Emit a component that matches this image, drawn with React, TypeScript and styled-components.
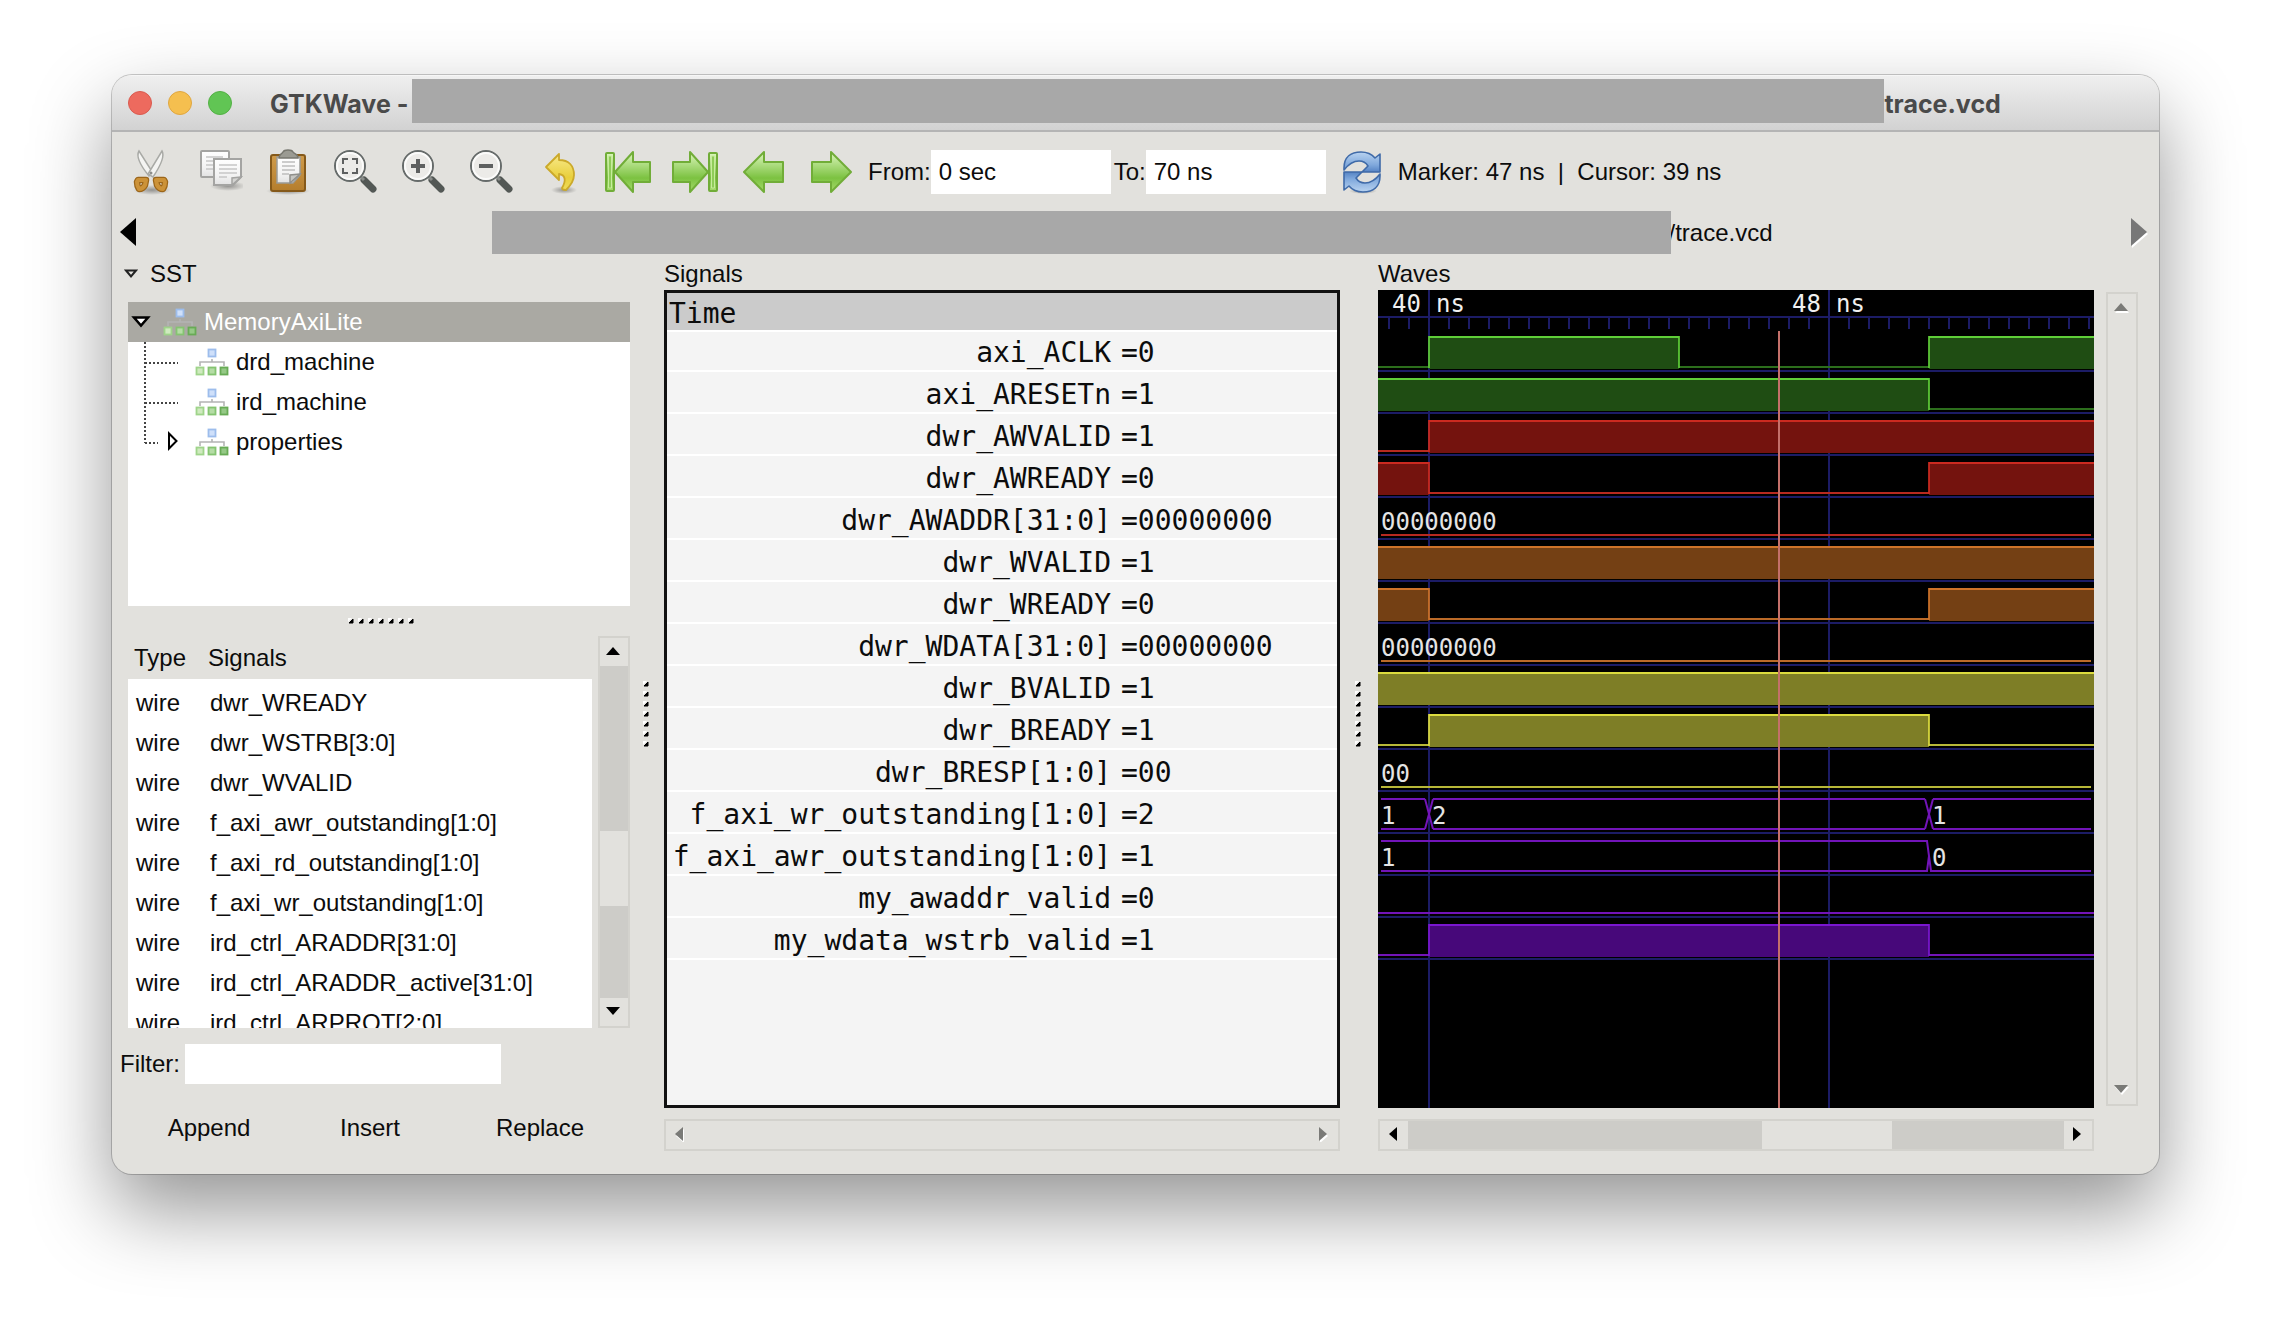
import React from "react";
import styled, { createGlobalStyle } from "styled-components";

const color = {
  chrome: "#e2e1dd",
  trough: "#cdccc8",
  edge: "#d3d2cd",
  selected: "#aaa9a3",
  redacted: "#a8a8a8",
  text: "#0c0c0c",
  grid: "#1c1c66",
  marker: "#c4706a",
};

const sans = `"Liberation Sans", Arial, sans-serif`;
const mono = `"DejaVu Sans Mono", "Liberation Mono", monospace`;

const GlobalStyle = createGlobalStyle`
  *, *::before, *::after { box-sizing: border-box; }
  body { margin: 0; background: #fff; color: ${color.text}; font: 24px/28px ${sans}; }
  button, input { font: inherit; color: inherit; border: 0; padding: 0; margin: 0; border-radius: 0; }
  button { background: none; }
  svg { display: block; }
`;

/* ---------- window frame ---------- */

const Desktop = styled.div`
  padding: 75px 111px 148px 112px;
`;

const Window = styled.main`
  border-radius: 20px;
  overflow: hidden;
  background: ${color.chrome};
  box-shadow: 0 0 0 1px rgba(0, 0, 0, 0.2), 0 36px 80px rgba(0, 0, 0, 0.42);
`;

const TitleBar = styled.header`
  display: grid;
  grid-template-columns: 1fr auto 1fr;
  height: 57px;
  padding-top: 3px;
  background: linear-gradient(#efefef, #d2d2d2);
  border-top: 1px solid #f6f6f6;
  border-bottom: 2px solid #b4b4b4;
`;

const Lights = styled.div`
  display: flex;
  align-items: center;
  gap: 16px;
  height: 48px;
  padding-left: 16px;
`;

const Light = styled.button<{ $fill: string; $ring: string }>`
  width: 24px;
  height: 24px;
  border-radius: 50%;
  background: ${(p) => p.$fill};
  border: 1px solid ${(p) => p.$ring};
`;

const Title = styled.h1`
  display: flex;
  gap: 4px;
  margin: 0;
  min-width: 0;
  color: #4a4a4a;
  font: 700 25px/50px Inter, ${sans};
`;

const TitlePath = styled.span`
  display: flex;
`;

const Redacted = styled.span<{ $width: number; $height: number }>`
  position: relative;
  width: ${(p) => p.$width}px;
  height: ${(p) => p.$height}px;
  background: ${color.redacted};
`;

/* ---------- toolbar ---------- */

const Toolbar = styled.div`
  display: flex;
  align-items: center;
  height: 79px;
  padding-left: 5px;
`;

const ToolButton = styled.button`
  display: grid;
  place-items: center;
  flex: none;
  width: 68px;
  height: 56px;
`;

const Field = styled.label`
  display: flex;
  align-items: center;
  margin-left: 3px;
`;

const TextBox = styled.input`
  width: 180px;
  height: 44px;
  padding: 0 8px;
  background: #fff;
`;

const Status = styled.output`
  white-space: pre;
`;

const Reload = styled(ToolButton)`
  width: 72px;
`;

/* ---------- file tab ---------- */

const TabBar = styled.nav`
  display: flex;
  align-items: center;
  justify-content: space-between;
  height: 43px;
  padding: 0 10px 0 8px;
`;

const TabName = styled.div`
  display: flex;
  align-items: center;
  margin-right: 4px;
`;

const TabText = styled.span`
  margin-left: -3px;
`;

/* ---------- panes ---------- */

const Panes = styled.div`
  display: grid;
  grid-template-columns: 518px 34px minmax(0, 676fr) 38px minmax(0, 716fr) 65px;
  padding-bottom: 23px;
`;

const Pane = styled.section`
  display: flex;
  flex-direction: column;
  min-width: 0;
`;

const PaneTitle = styled.h2`
  display: flex;
  align-items: center;
  gap: 12px;
  height: 36px;
  margin: 0;
  padding-top: 4px;
  font: inherit;
`;

const SidePane = styled(Pane)`
  padding-left: 16px;
`;

const SideTitle = styled(PaneTitle)`
  margin-left: -4px;
`;

const GripCell = styled.div`
  display: grid;
  place-items: center;
  padding: 23px 2px 0 0;
`;

const ListGrip = styled.div`
  display: grid;
  place-items: center;
  height: 30px;
  padding-left: 4px;
`;

/* ---------- hierarchy tree ---------- */

const Tree = styled.ul`
  margin: 12px 0 0;
  padding: 0;
  height: 304px;
  list-style: none;
  background: #fff;
`;

const TreeRow = styled.li<{ $selected?: boolean }>`
  display: flex;
  align-items: center;
  height: 40px;
  background: ${(p) => (p.$selected ? color.selected : "transparent")};
  color: ${(p) => (p.$selected ? "#fff" : "inherit")};
`;

const TreeName = styled.span`
  padding-left: 7px;
`;

/* ---------- signal list ---------- */

const ListArea = styled.div`
  display: flex;
  justify-content: space-between;
  height: 392px;
`;

const ListClip = styled.div`
  width: 464px;
  overflow: hidden;
`;

const ListTable = styled.table`
  width: 100%;
  border-collapse: separate;
  border-spacing: 0;
  background: #fff;
  th, td { padding: 0 0 0 8px; text-align: left; font-weight: 400; white-space: nowrap; }
  th { height: 47px; padding-left: 6px; background: ${color.chrome}; border-bottom: 4px solid #fff; }
  td { height: 40px; }
  th:first-child { width: 74px; }
`;

const FilterRow = styled.label`
  display: flex;
  align-items: center;
  gap: 5px;
  margin: 16px 0 0 -8px;
`;

const FilterBox = styled(TextBox)`
  width: 316px;
  height: 40px;
`;

const Actions = styled.div`
  display: grid;
  grid-template-columns: 162px 160px 180px;
  margin-top: 24px;
`;

const ActionButton = styled.button`
  height: 40px;
`;

/* ---------- scrollbars ---------- */

const Bar = styled.div<{ $vertical?: boolean; $live?: boolean }>`
  display: flex;
  flex: none;
  flex-direction: ${(p) => (p.$vertical ? "column" : "row")};
  justify-content: space-between;
  ${(p) => (p.$vertical ? "width: 32px; height: 100%;" : "height: 32px;")}
  border: 2px solid ${color.edge};
  background: ${(p) => (p.$live ? color.trough : color.chrome)};
`;

const BarSpace = styled.span<{ $grow: number }>`
  flex: ${(p) => p.$grow} 1 0;
`;

const BarThumb = styled(BarSpace)`
  background: ${color.chrome};
`;

const BarButton = styled.button`
  display: grid;
  place-items: center;
  width: 28px;
  height: 28px;
  padding: 0 2px 2px 0;
  background: ${color.chrome};
`;

const UnderBar = styled.div`
  margin-top: 11px;
`;

const SideBar = styled.div`
  display: flex;
  flex-direction: column;
  height: 814px;
  margin: 38px 0 0 12px;
`;

/* ---------- signals ---------- */

const SignalBox = styled.div`
  height: 818px;
  border: 3px solid #111;
  background: #f4f4f4;
  font: 28px/32px ${mono};
  overflow: hidden;
`;

const SignalTable = styled.table`
  width: 100%;
  border-collapse: separate;
  border-spacing: 0;
  table-layout: fixed;
  th { position: relative; height: 37px; padding: 5px 0 0 2px; text-align: left; font-weight: 400; background: #cbcbcb; box-shadow: 0 2px #fff; }
  td { height: 42px; padding: 6px 0 0; border-bottom: 2px solid #fff; white-space: nowrap; }
  td:first-child { text-align: right; padding-right: 10px; }
  th:first-child { width: 454px; }
`;

const WaveBox = styled.div`
  height: 818px;
  background: #000;
  overflow: hidden;
`;

/* ---------- data ---------- */

type Hue = { fill: string; high: string; low: string };
const green: Hue = { fill: "#1f4d13", high: "#5fce38", low: "#2c6e1c" };
const red: Hue = { fill: "#74130e", high: "#cc2a20", low: "#b82a20" };
const orange: Hue = { fill: "#744014", high: "#cf7329", low: "#bb6a28" };
const yellow: Hue = { fill: "#7e7e26", high: "#dcdc3e", low: "#b8b838" };
const purple: Hue = { fill: "#47087a", high: "#7a16d0", low: "#7214b8" };

type Signal = {
  name: string;
  value: string;
  hue: Hue;
  high?: [number, number][];
  bus?: { from: number; text: string }[];
};

// Times are in nanoseconds; END stands for "past the right edge".
const START = 38;
const END = 140;

const signals: Signal[] = [
  { name: "axi_ACLK", value: "0", hue: green, high: [[40, 45], [50, END]] },
  { name: "axi_ARESETn", value: "1", hue: green, high: [[START, 50]] },
  { name: "dwr_AWVALID", value: "1", hue: red, high: [[40, END]] },
  { name: "dwr_AWREADY", value: "0", hue: red, high: [[START, 40], [50, END]] },
  { name: "dwr_AWADDR[31:0]", value: "00000000", hue: red, bus: [{ from: START, text: "00000000" }] },
  { name: "dwr_WVALID", value: "1", hue: orange, high: [[START, END]] },
  { name: "dwr_WREADY", value: "0", hue: orange, high: [[START, 40], [50, END]] },
  { name: "dwr_WDATA[31:0]", value: "00000000", hue: orange, bus: [{ from: START, text: "00000000" }] },
  { name: "dwr_BVALID", value: "1", hue: yellow, high: [[START, END]] },
  { name: "dwr_BREADY", value: "1", hue: yellow, high: [[40, 50]] },
  { name: "dwr_BRESP[1:0]", value: "00", hue: yellow, bus: [{ from: START, text: "00" }] },
  { name: "f_axi_wr_outstanding[1:0]", value: "2", hue: purple, bus: [{ from: START, text: "1" }, { from: 40, text: "2" }, { from: 50, text: "1" }] },
  { name: "f_axi_awr_outstanding[1:0]", value: "1", hue: purple, bus: [{ from: START, text: "1" }, { from: 50, text: "0" }] },
  { name: "my_awaddr_valid", value: "0", hue: purple, high: [] },
  { name: "my_wdata_wstrb_valid", value: "1", hue: purple, high: [[40, 50]] },
];

const wires = [
  "dwr_WREADY",
  "dwr_WSTRB[3:0]",
  "dwr_WVALID",
  "f_axi_awr_outstanding[1:0]",
  "f_axi_rd_outstanding[1:0]",
  "f_axi_wr_outstanding[1:0]",
  "ird_ctrl_ARADDR[31:0]",
  "ird_ctrl_ARADDR_active[31:0]",
  "ird_ctrl_ARPROT[2:0]",
];

/* ---------- waveforms ---------- */

const NS = 50;
const ROW = 42;
const xAt = (t: number) => 51 + (t - 40) * NS;

function ScalarWave({ s, y }: { s: Signal; y: number }) {
  const spans = s.high ?? [];
  const edges = spans.flat().filter((t) => t !== START && t !== END);
  const lows: [number, number][] = [];
  let at = START;
  spans.forEach(([a, b]) => {
    if (a > at) lows.push([at, a]);
    at = b;
  });
  if (at < END) lows.push([at, END]);
  return (
    <g>
      {spans.map(([a, b]) => (
        <g key={a}>
          <rect x={xAt(a)} y={y + 47} width={xAt(b) - xAt(a)} height={32} fill={s.hue.fill} />
          <rect x={xAt(a)} y={y + 46} width={xAt(b) - xAt(a)} height={2} fill={s.hue.high} />
        </g>
      ))}
      {lows.map(([a, b]) => (
        <rect key={a} x={xAt(a)} y={y + 76} width={xAt(b) - xAt(a)} height={2} fill={s.hue.low} />
      ))}
      {edges.map((t) => (
        <rect key={t} x={xAt(t) - 1} y={y + 46} width={2} height={32} fill={s.hue.high} opacity={0.85} />
      ))}
    </g>
  );
}

function BusWave({ s, y }: { s: Signal; y: number }) {
  const parts = s.bus ?? [];
  const top = y + 47;
  const low = y + 77;
  const mid = y + 62;
  return (
    <g stroke={s.hue.low} strokeWidth={2} fill="none">
      {parts.map((p, i) => {
        const zero = /^0+$/.test(p.text);
        const next = parts[i + 1];
        const x1 = i === 0 ? 3 : xAt(p.from) + 4;
        const x2: number | string = next ? xAt(next.from) - 4 : "100%";
        return (
          <g key={p.from}>
            {!zero && <line x1={x1} y1={top} x2={x2} y2={top} />}
            <line x1={x1} y1={low} x2={x2} y2={low} />
            {i > 0 && !zero && (
              <path d={`M${x1 - 8} ${top}L${x1} ${low}M${x1 - 8} ${low}L${x1} ${top}`} />
            )}
            {i > 0 && zero && (
              <path d={`M${x1 - 8} ${top}h2L${x1 - 2} ${low}h2M${x1 - 8} ${low}h2L${x1 - 4} ${mid}`} />
            )}
            <text x={i === 0 ? 3 : xAt(p.from) + 3} y={y + 72} fill="#e4e4e4" stroke="none">
              {p.text}
            </text>
          </g>
        );
      })}
      <rect x="100%" y={y + 44} width={3} height={35} transform="translate(-3 0)" fill="#000" stroke="none" />
    </g>
  );
}

function Waves() {
  const ticks = Array.from({ length: 140 }, (_, i) => 11 + i * 20);
  return (
    <svg width="100%" height="100%" fontFamily={mono} fontSize={24} role="img" aria-label="Waveforms">
      <g fill={color.grid}>
        <rect x={0} y={26} width="100%" height={2} />
        {ticks.map((x) => (
          <rect key={x} x={x - 1} y={28} width={2} height={11} />
        ))}
        {signals.map((s, i) => (
          <rect key={s.name} x={0} y={i * ROW + 80} width="100%" height={2} />
        ))}
        {[40, 48].map((t) => (
          <rect key={t} x={xAt(t) - 1} y={0} width={2} height="100%" />
        ))}
      </g>
      {[40, 48].map((t) => (
        <g key={t} fill="#f0f0f0">
          <text x={xAt(t) - 8} y={22} textAnchor="end">{t}</text>
          <text x={xAt(t) + 7} y={22}>ns</text>
        </g>
      ))}
      {signals.map((s, i) =>
        s.bus ? <BusWave key={s.name} s={s} y={i * ROW} /> : <ScalarWave key={s.name} s={s} y={i * ROW} />
      )}
      <rect x={xAt(47) - 1} y={41} width={2} height="100%" fill={color.marker} />
    </svg>
  );
}

/* ---------- small drawings ---------- */

type Dir = "up" | "down" | "left" | "right";
const turn: Record<Dir, number> = { up: 0, right: 90, down: 180, left: 270 };

function Arrow({ dir, dim }: { dir: Dir; dim?: boolean }) {
  const shape = <path d="M8 4L15 12H1Z" transform={`rotate(${turn[dir]} 8 8)`} />;
  return (
    <svg width="16" height="16" viewBox="0 0 16 16">
      {dim && <g fill="#fff" transform="translate(1 2)">{shape}</g>}
      <g fill={dim ? "#7a7a77" : "#000"}>{shape}</g>
    </svg>
  );
}

function TabArrow({ dir, dim }: { dir: "left" | "right"; dim?: boolean }) {
  const d = dir === "left" ? "M16 0V28L0 14Z" : "M0 0V28L16 14Z";
  return (
    <svg width="18" height="30" viewBox="0 0 18 30">
      {dim && <path d={d} fill="#fff" transform="translate(1 2)" />}
      <path d={d} fill={dim ? "#777" : "#000"} />
    </svg>
  );
}

function Grip({ vertical }: { vertical?: boolean }) {
  const dots = [0, 1, 2, 3, 4, 5, 6];
  return (
    <svg width={vertical ? 6 : 66} height={vertical ? 66 : 6}>
      {dots.map((i) => (
        <g key={i} transform={vertical ? `translate(0 ${i * 10})` : `translate(${i * 10} 0)`}>
          <path d="M0 0H4L0 4Z" fill="#fff" />
          <path d="M5 1V5H1Z" fill="#000" stroke="#000" />
        </g>
      ))}
    </svg>
  );
}

function Disclosure() {
  return (
    <svg width="14" height="10" viewBox="0 0 14 10">
      <path d="M2 1.5H12L7 7.5Z" fill="#e2e1dd" stroke="#222" strokeWidth="2" />
    </svg>
  );
}

function ModuleIcon() {
  return (
    <svg width="34" height="30" viewBox="0 0 34 30">
      <path d="M5 19V15H29V19M17 12V15" fill="none" stroke="#b4b4b4" strokeWidth="1.6" />
      <rect x="13.5" y="2.5" width="7" height="7" fill="#cfe0fa" stroke="#9dbdec" strokeWidth="1.8" />
      <rect x="1.5" y="20.5" width="7" height="7" fill="#cfeabf" stroke="#9fd48a" strokeWidth="1.8" />
      <rect x="13.5" y="20.5" width="7" height="7" fill="#b5dda5" stroke="#85c471" strokeWidth="1.8" />
      <rect x="25.5" y="20.5" width="7" height="7" fill="#95c986" stroke="#68ab55" strokeWidth="1.8" />
    </svg>
  );
}

function Guide({ kind }: { kind: "root" | "leaf" | "last" }) {
  if (kind === "root") {
    return (
      <svg width="35" height="40">
        <path d="M6 15.5H20L13 23.5Z" fill="#fff" stroke="#000" strokeWidth="2.5" />
      </svg>
    );
  }
  return (
    <svg width="67" height="40">
      <g stroke="#444" strokeWidth="2" strokeDasharray="2 2" fill="none">
        <path d={kind === "leaf" ? "M17 0V40M17 21H50" : "M17 0V21M17 21H30"} />
      </g>
      {kind === "last" && <path d="M41 11.5V26.5L48.5 19Z" fill="#fff" stroke="#000" strokeWidth="2" />}
    </svg>
  );
}

/* ---------- toolbar icons ---------- */

function Icon({ children }: { children: React.ReactNode }) {
  return (
    <svg width="48" height="48" viewBox="0 0 48 48" fill="none">
      {children}
    </svg>
  );
}

function Gradients() {
  const stops: [string, string, string, string][] = [
    ["gGreen", "#dcf6bd", "#7cc241", "#a6da6c"],
    ["gGold", "#f8ea8c", "#e9cf3c", "#efdc5a"],
    ["gBlue", "#b9d3f0", "#7fa8dc", "#5583c4"],
    ["gWood", "#d09c4b", "#be8838", "#b47d2c"],
    ["gPage", "#ffffff", "#f2f2f2", "#e2e2e2"],
  ];
  return (
    <svg width="0" height="0" aria-hidden="true">
      <defs>
        {stops.map(([id, a, b, c]) => (
          <linearGradient key={id} id={id} x1="0" y1="0" x2="0" y2="1">
            <stop offset="0" stopColor={a} />
            <stop offset="0.65" stopColor={b} />
            <stop offset="1" stopColor={c} />
          </linearGradient>
        ))}
        <radialGradient id="gShade">
          <stop offset="0" stopColor="#000" stopOpacity="0.35" />
          <stop offset="1" stopColor="#000" stopOpacity="0" />
        </radialGradient>
      </defs>
    </svg>
  );
}

function CutIcon() {
  return (
    <Icon>
      <ellipse cx="25" cy="42" rx="19" ry="5" fill="url(#gShade)" />
      <path d="M12 3C9 8 13 17 22 28L26 25Z" fill="#f4f4f2" stroke="#a9aaa6" strokeWidth="1.5" />
      <path d="M35 3C38 8 34 17 26 29L21 26Z" fill="#f4f4f2" stroke="#a9aaa6" strokeWidth="1.5" />
      <circle cx="24" cy="25" r="1.5" fill="#8d8d8a" />
      <g fill="#e2e1dd" stroke="#9c661a" strokeWidth="6.5" strokeLinejoin="round">
        <path d="M11 32H19L18 37Q16 41 12 41Q10 38 10 34Z" />
        <path d="M37 32H29L30 37Q32 41 36 41Q38 38 38 34Z" />
      </g>
      <g stroke="#cc9238" strokeWidth="4" strokeLinejoin="round">
        <path d="M11 32H19L18 37Q16 41 12 41Q10 38 10 34Z" />
        <path d="M37 32H29L30 37Q32 41 36 41Q38 38 38 34Z" />
      </g>
    </Icon>
  );
}

function CopyIcon() {
  return (
    <Icon>
      <ellipse cx="33" cy="38" rx="18" ry="5" fill="url(#gShade)" />
      <rect x="6" y="3" width="28" height="26" rx="1" fill="url(#gPage)" stroke="#a4a4a2" strokeWidth="2" />
      <path d="M11 9H28M11 13H28M11 17H20M11 21H20" stroke="#c6c6c6" strokeWidth="1.5" />
      <path d="M19 11H46V29L38 37H19Z" fill="url(#gPage)" stroke="#a4a4a2" strokeWidth="2" />
      <path d="M24 17H42M24 21H42M24 25H42M24 29H32" stroke="#c6c6c6" strokeWidth="1.5" />
      <path d="M46 29L37 30L37 37Z" fill="#d4d4d2" stroke="#a4a4a2" strokeWidth="1.5" />
    </Icon>
  );
}

function PasteIcon() {
  return (
    <Icon>
      <ellipse cx="25" cy="43" rx="22" ry="4" fill="url(#gShade)" />
      <rect x="8" y="7" width="34" height="36" rx="2" fill="url(#gWood)" stroke="#85591a" strokeWidth="2" />
      <path d="M14 9H37V27L30 35H14Z" fill="url(#gPage)" stroke="#9b9b97" strokeWidth="1.5" />
      <path d="M19 14H32M19 18H32M19 22H32M19 26H26" stroke="#bdbdbd" strokeWidth="1.5" />
      <path d="M37 26L27 27L27 35Z" fill="#c6c6c2" stroke="#8f8f8b" strokeWidth="1.5" />
      <path d="M16 10C16 6 19 6 20 4Q21 2 25 2Q29 2 30 4C31 6 35 6 35 10Z" fill="#9b9b93" stroke="#77776f" strokeWidth="1.5" />
    </Icon>
  );
}

function ZoomIcon({ kind }: { kind: "fit" | "in" | "out" }) {
  return (
    <Icon>
      <path d="M33 32L42 41" stroke="#535855" strokeWidth="7" strokeLinecap="round" />
      <path d="M29 28L33 32" stroke="#8a8d8a" strokeWidth="3" />
      <circle cx="19" cy="18" r="15" fill="#ecebe8" stroke="#666b6a" strokeWidth="2" />
      <circle cx="19" cy="18" r="13" stroke="#fbfbfa" strokeWidth="2" />
      {kind === "fit" && (
        <path d="M12 16V11H17M21 11H26V16M26 20V25H21M17 25H12V20" stroke="#5e6060" strokeWidth="2" />
      )}
      {kind === "in" && <path d="M12 18H26M19 11V25" stroke="#5e6060" strokeWidth="4" />}
      {kind === "out" && <path d="M12 18H26" stroke="#5e6060" strokeWidth="4" />}
    </Icon>
  );
}

function UndoIcon() {
  return (
    <Icon>
      <ellipse cx="29" cy="42" rx="13" ry="4" fill="url(#gShade)" />
      <path
        d="M11 19L24 6V12C34 12 39 18 39 27C39 34 34 39 31 42Q27 42 27 40C31 33 31 27 24 26V32Z"
        fill="url(#gGold)"
        stroke="#cba92a"
        strokeWidth="1.8"
        strokeLinejoin="round"
      />
    </Icon>
  );
}

function MoveIcon({ flip, bar }: { flip?: boolean; bar?: boolean }) {
  const arrow = bar ? "M12 24L30 4V14H47V34H30V44Z" : "M5 24L25 4V14H44V34H25V44Z";
  return (
    <Icon>
      <g
        transform={flip ? "translate(49 0) scale(-1 1)" : undefined}
        fill="url(#gGreen)"
        stroke="#71ad38"
        strokeWidth="2"
        strokeLinejoin="round"
      >
        <path d={arrow} />
        {bar && <rect x="3" y="5" width="8" height="38" rx="1" />}
        {bar && <rect x="5.5" y="8" width="3" height="32" stroke="#c7ec9c" strokeWidth="1" fill="#8fcc59" />}
      </g>
    </Icon>
  );
}

function ReloadIcon() {
  const half = "M6 20C6 9 13 4 23 4Q32 4 37 10L42 6V24H24L30 18Q27 13 21 13Q13 13 6 22Z";
  return (
    <Icon>
      <ellipse cx="25" cy="43" rx="14" ry="3" fill="url(#gShade)" />
      <g fill="url(#gBlue)" stroke="#3f6aa8" strokeWidth="1.6" strokeLinejoin="round">
        <path d={half} />
        <path d={half} transform="rotate(180 24 24)" />
      </g>
    </Icon>
  );
}

const tools: [string, React.ReactNode][] = [
  ["Cut", <CutIcon />],
  ["Copy", <CopyIcon />],
  ["Paste", <PasteIcon />],
  ["Zoom fit", <ZoomIcon kind="fit" />],
  ["Zoom in", <ZoomIcon kind="in" />],
  ["Zoom out", <ZoomIcon kind="out" />],
  ["Zoom undo", <UndoIcon />],
  ["Zoom to start", <MoveIcon bar />],
  ["Zoom to end", <MoveIcon bar flip />],
  ["Previous edge", <MoveIcon />],
  ["Next edge", <MoveIcon flip />],
];

/* ---------- scrollbar ---------- */

function ScrollBar({ vertical, parts }: { vertical?: boolean; parts?: [number, number, number] }) {
  const dim = !parts;
  return (
    <Bar $vertical={vertical} $live={!dim}>
      <BarButton aria-label="Scroll back" disabled={dim}>
        <Arrow dir={vertical ? "up" : "left"} dim={dim} />
      </BarButton>
      {parts && (
        <>
          <BarSpace $grow={parts[0]} />
          <BarThumb $grow={parts[1]} />
          <BarSpace $grow={parts[2]} />
        </>
      )}
      <BarButton aria-label="Scroll forward" disabled={dim}>
        <Arrow dir={vertical ? "down" : "right"} dim={dim} />
      </BarButton>
    </Bar>
  );
}

/* ---------- application ---------- */

export default function App() {
  return (
    <Desktop>
      <GlobalStyle />
      <Window>
        <Gradients />
        <TitleBar>
          <Lights>
            <Light $fill="#ed6a5e" $ring="#d95a4f" aria-label="Close" />
            <Light $fill="#f5bf4f" $ring="#dfa640" aria-label="Minimize" />
            <Light $fill="#61c554" $ring="#53b045" aria-label="Zoom" />
          </Lights>
          <Title>
            GTKWave -
            <TitlePath>
              <Redacted $width={1472} $height={44} />
              trace.vcd
            </TitlePath>
          </Title>
        </TitleBar>

        <Toolbar>
          {tools.map(([name, icon]) => (
            <ToolButton key={name} aria-label={name}>{icon}</ToolButton>
          ))}
          <Field>From:<TextBox defaultValue="0 sec" /></Field>
          <Field>To:<TextBox defaultValue="70 ns" /></Field>
          <Reload aria-label="Reload"><ReloadIcon /></Reload>
          <Status>{"Marker: 47 ns  |  Cursor: 39 ns"}</Status>
        </Toolbar>

        <TabBar>
          <button aria-label="Previous tab"><TabArrow dir="left" /></button>
          <TabName>
            <Redacted $width={1179} $height={43} />
            <TabText>/trace.vcd</TabText>
          </TabName>
          <button aria-label="Next tab" disabled><TabArrow dir="right" dim /></button>
        </TabBar>

        <Panes>
          <SidePane>
            <SideTitle><Disclosure />SST</SideTitle>
            <Tree>
              <TreeRow $selected><Guide kind="root" /><ModuleIcon /><TreeName>MemoryAxiLite</TreeName></TreeRow>
              <TreeRow><Guide kind="leaf" /><ModuleIcon /><TreeName>drd_machine</TreeName></TreeRow>
              <TreeRow><Guide kind="leaf" /><ModuleIcon /><TreeName>ird_machine</TreeName></TreeRow>
              <TreeRow><Guide kind="last" /><ModuleIcon /><TreeName>properties</TreeName></TreeRow>
            </Tree>
            <ListGrip><Grip /></ListGrip>
            <ListArea>
              <ListClip>
                <ListTable>
                  <thead>
                    <tr><th>Type</th><th>Signals</th></tr>
                  </thead>
                  <tbody>
                    {wires.map((w) => (
                      <tr key={w}><td>wire</td><td>{w}</td></tr>
                    ))}
                  </tbody>
                </ListTable>
              </ListClip>
              <ScrollBar vertical parts={[165, 75, 92]} />
            </ListArea>
            <FilterRow>Filter:<FilterBox /></FilterRow>
            <Actions>
              <ActionButton>Append</ActionButton>
              <ActionButton>Insert</ActionButton>
              <ActionButton>Replace</ActionButton>
            </Actions>
          </SidePane>

          <GripCell><Grip vertical /></GripCell>

          <Pane>
            <PaneTitle>Signals</PaneTitle>
            <SignalBox>
              <SignalTable>
                <thead>
                  <tr><th>Time</th><th aria-label="Value" /></tr>
                </thead>
                <tbody>
                  {signals.map((s) => (
                    <tr key={s.name}><td>{s.name}</td><td>={s.value}</td></tr>
                  ))}
                </tbody>
              </SignalTable>
            </SignalBox>
            <UnderBar><ScrollBar /></UnderBar>
          </Pane>

          <GripCell><Grip vertical /></GripCell>

          <Pane>
            <PaneTitle>Waves</PaneTitle>
            <WaveBox><Waves /></WaveBox>
            <UnderBar><ScrollBar parts={[354, 130, 172]} /></UnderBar>
          </Pane>

          <SideBar><ScrollBar vertical /></SideBar>
        </Panes>
      </Window>
    </Desktop>
  );
}
